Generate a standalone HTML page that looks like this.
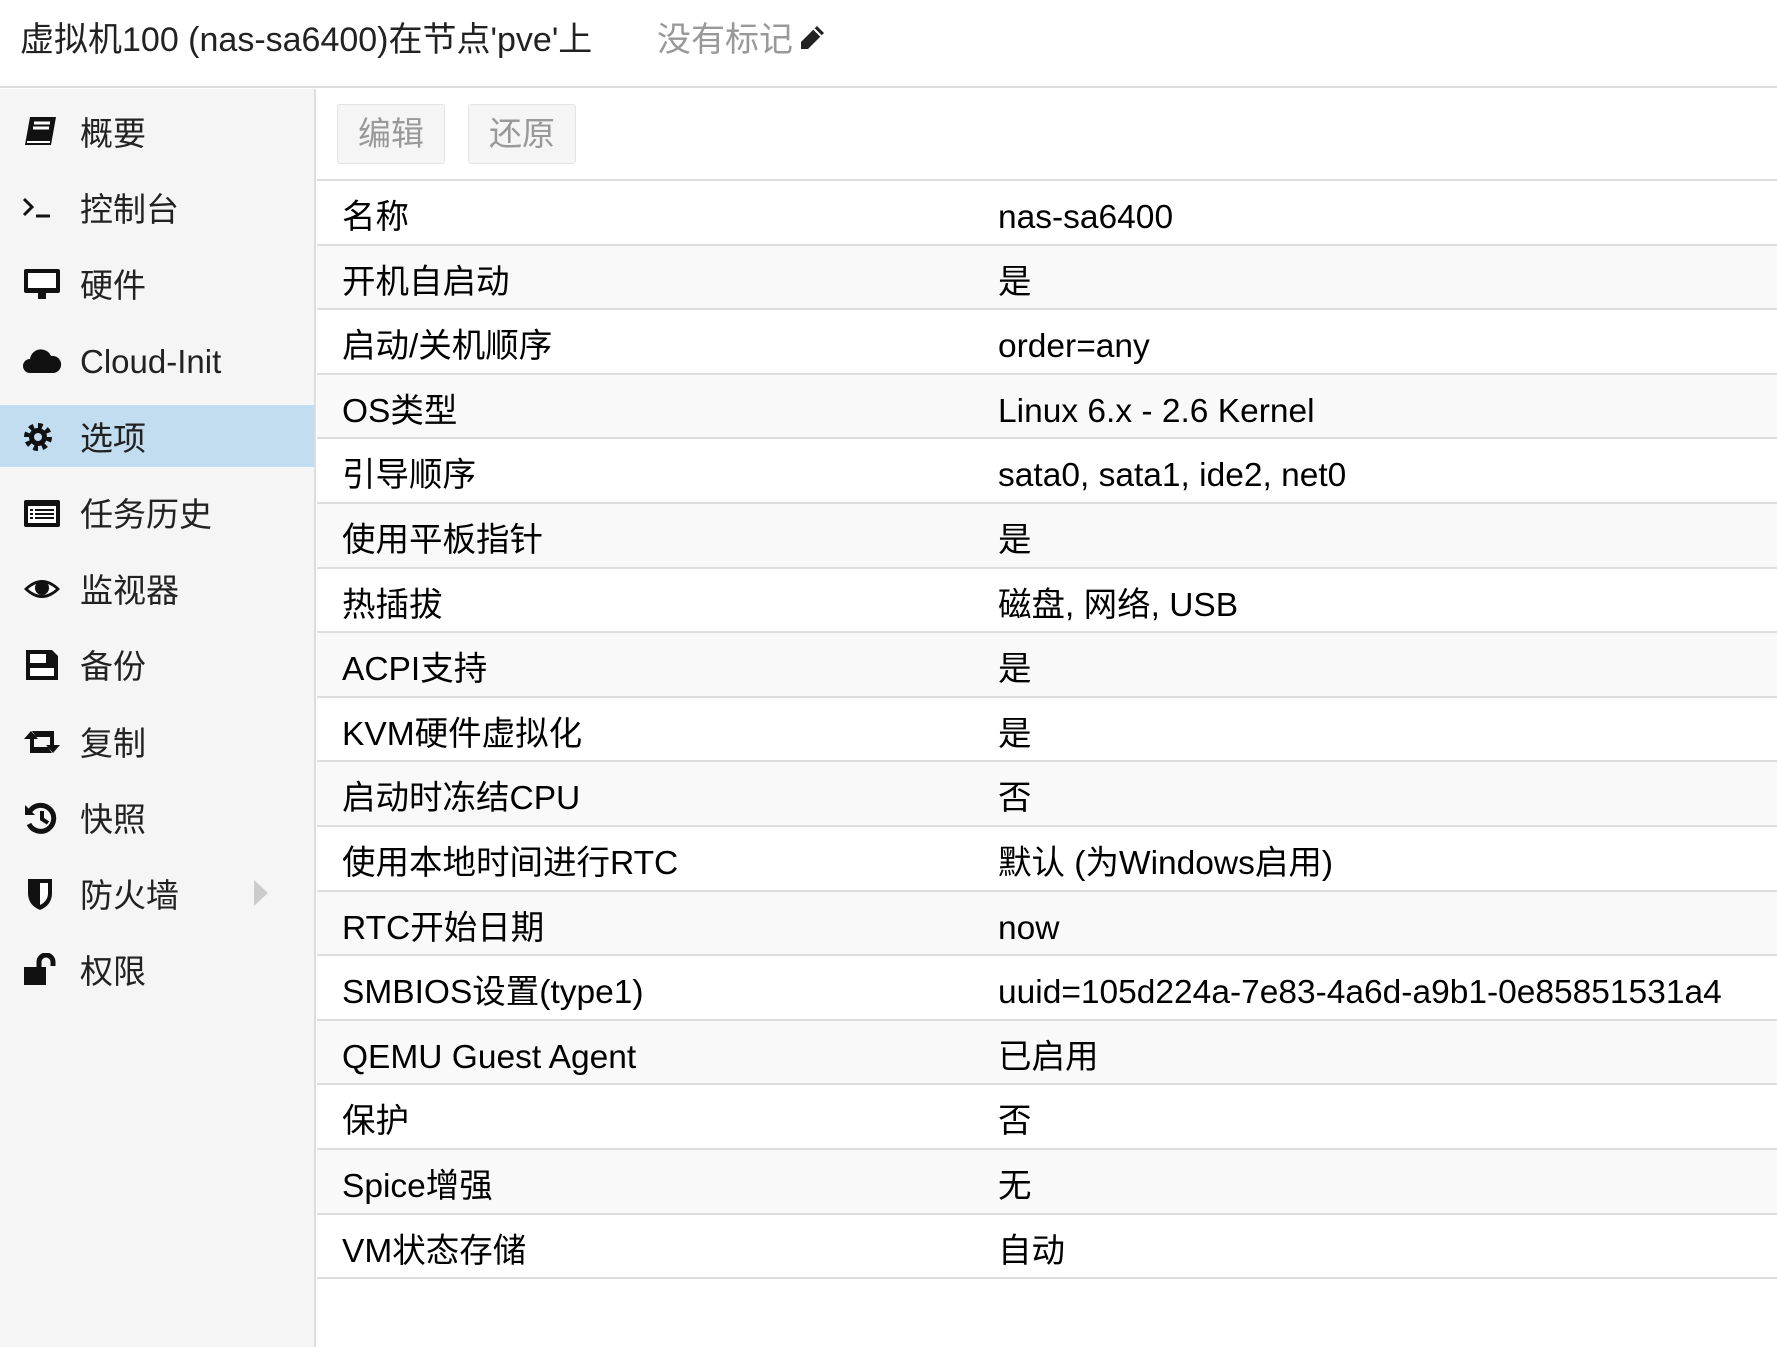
<!DOCTYPE html>
<html><head><meta charset="utf-8"><style>
*{margin:0;padding:0;box-sizing:border-box}
body{width:1777px;height:1347px;background:#fff;font-family:"Liberation Sans","Noto Sans CJK SC",sans-serif;color:#000;overflow:hidden;position:relative}
.hdr{position:absolute;left:0;top:0;width:1777px;height:88px;border-bottom:2px solid #ddd;background:#fff}
.hdr .t{position:absolute;left:20px;top:0;height:80px;line-height:80px;font-size:34px;color:#222}
.hdr .tag{position:absolute;left:657px;top:0;height:80px;line-height:80px;font-size:34px;color:#999}
.side{position:absolute;left:0;top:89px;width:316px;height:1258px;background:#f5f5f5;border-right:2px solid #ddd}
.item{position:absolute;left:0;width:314px;height:62px;font-size:33px;color:#222;line-height:62px}
.item .ic{position:absolute;left:22px;top:15px;width:40px;height:34px}
.item .lb{position:absolute;left:80px;top:3px}
.sel{background:#c2dcf0}
.tb{position:absolute;left:317px;top:89px;right:0;height:92px;background:#fff;border-bottom:2px solid #ddd}
.btn{position:absolute;top:15px;height:60px;width:108px;border:1px solid #e4e4e4;border-radius:3px;background:#f5f5f5;color:#999;font-size:33px;text-align:center;line-height:58px}
.row{position:absolute;left:317px;right:0;height:64.6px;border-bottom:2px solid #ddd;font-size:33.5px;line-height:62px}
.row .k{position:absolute;left:25px;top:6px}
.row .v{position:absolute;left:681px;top:6px;white-space:nowrap}
.alt{background:#f9f9f9}
</style></head><body>
<div class="hdr"><div class="t">虚拟机100 (nas-sa6400)在节点'pve'上</div>
<div class="tag">没有标记<svg width="30" height="30" viewBox="0 0 30 30" style="vertical-align:-2px;margin-left:4px"><path d="M20 3l7 7L11 26H4v-7z" fill="#222"/><path d="M17 6l7 7" stroke="#fff" stroke-width="2"/></svg></div></div>
<div class="side">
<div class="item" style="top:11px"><svg class="ic" viewBox="0 0 40 34"><path d="M8 2h26l-5 28H3z" fill="#111"/><path d="M12 8h16M11 13h16" stroke="#fff" stroke-width="3"/><path d="M5 27h23" stroke="#fff" stroke-width="2"/></svg><span class="lb">概要</span></div>
<div class="item" style="top:87px"><svg class="ic" viewBox="0 0 40 34"><path d="M2 8l8 8-8 8" stroke="#111" stroke-width="3" fill="none"/><path d="M14 25h14" stroke="#111" stroke-width="3"/></svg><span class="lb">控制台</span></div>
<div class="item" style="top:163px"><svg class="ic" viewBox="0 0 40 34"><rect x="2" y="2" width="36" height="24" rx="2" fill="#111"/><rect x="6" y="6" width="28" height="15" fill="#fff"/><rect x="16" y="26" width="8" height="6" fill="#111"/></svg><span class="lb">硬件</span></div>
<div class="item" style="top:239px"><svg class="ic" viewBox="0 0 40 34"><path d="M8 30a7 7 0 010-14a11 11 0 0121-3a8 8 0 013 17z" fill="#111"/></svg><span class="lb">Cloud-Init</span></div>
<div class="item sel" style="top:316px"><svg class="ic" viewBox="0 0 40 34"><circle cx="16" cy="17" r="10" fill="none" stroke="#111" stroke-width="8" stroke-dasharray="4 3.8"/><circle cx="16" cy="17" r="9" fill="#111"/><circle cx="16" cy="17" r="4" fill="#c2dcf0"/></svg><span class="lb">选项</span></div>
<div class="item" style="top:392px"><svg class="ic" viewBox="0 0 40 34"><rect x="2" y="4" width="36" height="27" rx="2" fill="#111"/><rect x="6" y="10" width="28" height="17" fill="#fff"/><path d="M8 14h3M13 14h19M8 18h3M13 18h19M8 22h3M13 22h19" stroke="#111" stroke-width="2"/></svg><span class="lb">任务历史</span></div>
<div class="item" style="top:468px"><svg class="ic" viewBox="0 0 40 34"><path d="M2 17q18-18 36 0q-18 18-36 0z" fill="#111"/><path d="M6 17q14-12 28 0q-14 12-28 0z" fill="#fff"/><circle cx="20" cy="16" r="7" fill="#111"/></svg><span class="lb">监视器</span></div>
<div class="item" style="top:544px"><svg class="ic" viewBox="0 0 40 34"><path d="M4 2h26l6 6v24H4z" fill="#111"/><rect x="8" y="6" width="16" height="9" fill="#fff"/><rect x="8" y="20" width="24" height="8" fill="#fff"/></svg><span class="lb">备份</span></div>
<div class="item" style="top:621px"><svg class="ic" viewBox="0 0 40 34"><path d="M2 14l7-8 7 8h-4v8h14l4 6H8V14z" fill="#111"/><path d="M38 20l-7 8-7-8h4v-8H14l-4-6h22v14z" fill="#111"/></svg><span class="lb">复制</span></div>
<div class="item" style="top:697px"><svg class="ic" viewBox="0 0 40 34"><path d="M8 10a13 13 0 11-1 13" stroke="#111" stroke-width="5" fill="none"/><path d="M3 4v10h10z" fill="#111"/><path d="M20 10v8l6 4" stroke="#111" stroke-width="4" fill="none"/></svg><span class="lb">快照</span></div>
<div class="item" style="top:773px"><svg class="ic" viewBox="0 0 40 34"><path d="M6 2h24v14q0 12-12 17Q6 28 6 16z" fill="#111"/><path d="M18 6h8v10q0 8-8 12z" fill="#fff"/></svg><span class="lb">防火墙</span><svg style="position:absolute;left:254px;top:18px" width="14" height="26" viewBox="0 0 14 26"><path d="M0 0l14 13L0 26z" fill="#ccc"/></svg></div>
<div class="item" style="top:849px"><svg class="ic" viewBox="0 0 40 34"><rect x="2" y="14" width="22" height="18" fill="#111"/><path d="M17 16V9a7 7 0 0114 0v4" stroke="#111" stroke-width="5" fill="none"/></svg><span class="lb">权限</span></div>
</div>
<div class="tb"><div class="btn" style="left:20px">编辑</div><div class="btn" style="left:151px">还原</div></div>
<div class="row" style="top:181px"><span class="k">名称</span><span class="v">nas-sa6400</span></div>
<div class="row alt" style="top:245.6px"><span class="k">开机自启动</span><span class="v">是</span></div>
<div class="row" style="top:310.2px"><span class="k">启动/关机顺序</span><span class="v">order=any</span></div>
<div class="row alt" style="top:374.8px"><span class="k">OS类型</span><span class="v">Linux 6.x - 2.6 Kernel</span></div>
<div class="row" style="top:439.4px"><span class="k">引导顺序</span><span class="v">sata0, sata1, ide2, net0</span></div>
<div class="row alt" style="top:504px"><span class="k">使用平板指针</span><span class="v">是</span></div>
<div class="row" style="top:568.6px"><span class="k">热插拔</span><span class="v">磁盘, 网络, USB</span></div>
<div class="row alt" style="top:633.2px"><span class="k">ACPI支持</span><span class="v">是</span></div>
<div class="row" style="top:697.8px"><span class="k">KVM硬件虚拟化</span><span class="v">是</span></div>
<div class="row alt" style="top:762.4px"><span class="k">启动时冻结CPU</span><span class="v">否</span></div>
<div class="row" style="top:827px"><span class="k">使用本地时间进行RTC</span><span class="v">默认 (为Windows启用)</span></div>
<div class="row alt" style="top:891.6px"><span class="k">RTC开始日期</span><span class="v">now</span></div>
<div class="row" style="top:956.2px"><span class="k">SMBIOS设置(type1)</span><span class="v">uuid=105d224a-7e83-4a6d-a9b1-0e85851531a4</span></div>
<div class="row alt" style="top:1020.8px"><span class="k">QEMU Guest Agent</span><span class="v">已启用</span></div>
<div class="row" style="top:1085.4px"><span class="k">保护</span><span class="v">否</span></div>
<div class="row alt" style="top:1150px"><span class="k">Spice增强</span><span class="v">无</span></div>
<div class="row" style="top:1214.6px"><span class="k">VM状态存储</span><span class="v">自动</span></div>
</body></html>
